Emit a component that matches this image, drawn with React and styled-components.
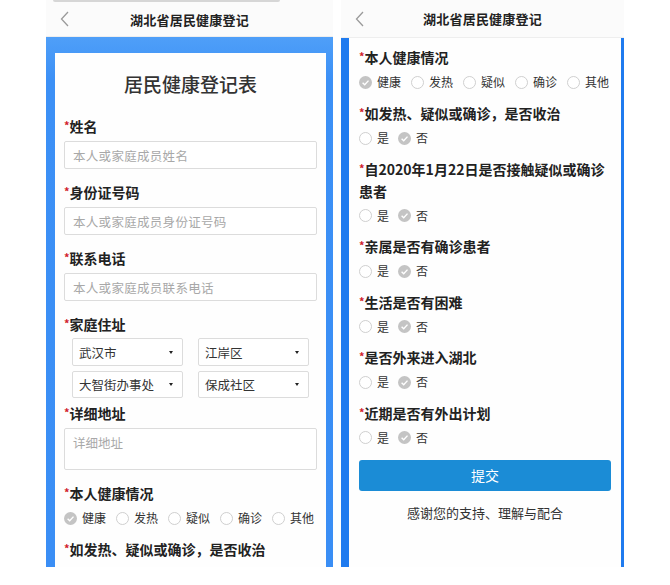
import React from 'react'
import styled, { createGlobalStyle } from 'styled-components'

const GlobalStyle = createGlobalStyle`
  body {
    margin: 0;
    background: #fff;
    font-family: 'Noto Sans CJK SC', 'Noto Sans', sans-serif;
  }
`

const Page = styled.div`
  display: flex;
  align-items: flex-start;
  gap: 8px;
  height: 585px;
  padding-left: 46px;
  overflow: hidden;
`

const Phone = styled.div`
  width: ${(p) => p.$width}px;
  height: 567px;
  display: flex;
  flex-direction: column;
  overflow: hidden;
  background: #fbfbfb;
`

const TopEdge = styled.div`
  height: 2px;
  margin: 0 53px 0 7px;
  border-radius: 0 0 2px 2px;
  background: #d6d6d6;
`

const Header = styled.div`
  height: ${(p) => p.$height}px;
  display: grid;
  grid-template-columns: 1fr auto 1fr;
  align-items: center;
  flex-shrink: 0;
  border-bottom: 1px solid #eeeeee;
  box-sizing: border-box;

  h2 {
    margin: 0;
    font-size: 13px;
    font-weight: 700;
    color: #222;
    letter-spacing: 0.2px;
  }

  svg {
    margin-left: 14px;
    display: block;
  }
`

const Frame = styled.div`
  flex: 1;
  display: flex;
  padding: ${(p) => (p.$left ? '16px 7px 0 9px' : '0 3px 0 8px')};
  background: ${(p) =>
    p.$left
      ? 'linear-gradient(180deg, #4f9ff8 0%, #3c90f6 8%, #3a8ef5 100%)'
      : '#1f7bef'};
`

const Card = styled.div`
  flex: 1;
  background: #fefefe;
  padding: ${(p) => (p.$left ? '16px 9px 0' : '8px 10px 0')};
  overflow: hidden;
`

const FormTitle = styled.h1`
  margin: 0 0 16px;
  font-size: 19px;
  line-height: 30px;
  font-weight: 500;
  text-align: center;
  color: #333;
`

const Field = styled.div`
  margin-bottom: ${(p) => p.$gap ?? 12}px;
`

const Label = styled.div`
  font-size: 14px;
  line-height: 22px;
  font-weight: 700;
  color: #222;

  span {
    position: relative;
    top: -2px;
    line-height: 0;
    color: #d0202a;
    font-size: 11px;
  }
`

const TextInput = styled.input`
  display: block;
  width: 100%;
  box-sizing: border-box;
  height: 28px;
  margin-top: 4px;
  padding: 0 8px;
  border: 1px solid #dcdcdc;
  border-radius: 2px;
  background: #fff;
  font-family: inherit;
  font-size: 12.5px;
  letter-spacing: 0.3px;

  &::placeholder {
    color: #a8a8a8;
  }
`

const TextArea = styled.textarea`
  display: block;
  width: 100%;
  box-sizing: border-box;
  height: 42px;
  margin-top: 4px;
  padding: 4px 8px;
  border: 1px solid #dcdcdc;
  border-radius: 2px;
  background: #fff;
  font-family: inherit;
  font-size: 12.5px;
  resize: none;

  &::placeholder {
    color: #a8a8a8;
  }
`

const SelectGrid = styled.div`
  display: grid;
  grid-template-columns: 1fr 1fr;
  gap: 5px 15px;
  padding: 3px 8px 0;
`

const SelectBox = styled.div`
  height: ${(p) => p.$height}px;
  box-sizing: border-box;
  display: flex;
  align-items: center;
  justify-content: space-between;
  padding: 0 9px 0 6px;
  border: 1px solid #dcdcdc;
  border-radius: 2px;
  background: #fff;
  font-size: 12.5px;
  color: #333;

  i {
    width: 0;
    height: 0;
    border-left: 2.5px solid transparent;
    border-right: 2.5px solid transparent;
    border-top: 3px solid #222;
  }
`

const RadioRow = styled.div`
  display: flex;
  align-items: center;
  gap: ${(p) => p.$gap}px;
  height: 22px;
  margin-top: 3px;
`

const Option = styled.label`
  display: flex;
  align-items: center;
  gap: 5px;
  font-size: 12px;
  line-height: 22px;
  color: #333;

  svg {
    display: block;
  }
`

const SubmitButton = styled.button`
  display: block;
  width: 100%;
  height: 31px;
  margin-top: 11px;
  border: none;
  border-radius: 3px;
  background: #1b8cd6;
  color: #fff;
  font-family: inherit;
  font-size: 14px;
`

const Thanks = styled.p`
  margin: 12px 0 0;
  line-height: 20px;
  font-size: 13px;
  text-align: center;
  color: #333;
`

const Chevron = () => (
  <svg width="9" height="16" viewBox="0 0 9 16">
    <path d="M8 1 L1.5 8 L8 15" fill="none" stroke="#9a9a9a" strokeWidth="1.3" />
  </svg>
)

const RadioMark = ({ checked }) =>
  checked ? (
    <svg width="13" height="13" viewBox="0 0 13 13">
      <circle cx="6.5" cy="6.5" r="6.5" fill="#c4c4c4" />
      <path d="M3.6 6.8 L5.7 8.8 L9.5 4.6" fill="none" stroke="#fff" strokeWidth="1.4" />
    </svg>
  ) : (
    <svg width="13" height="13" viewBox="0 0 13 13">
      <circle cx="6.5" cy="6.5" r="6" fill="#fff" stroke="#cfcfcf" strokeWidth="1" />
    </svg>
  )

const healthOptions = ['健康', '发热', '疑似', '确诊', '其他']

const Req = ({ children }) => (
  <Label>
    <span>*</span>
    {children}
  </Label>
)

const HealthField = () => (
  <Field $gap={9}>
    <Req>本人健康情况</Req>
    <RadioRow $gap={10}>
      {healthOptions.map((o, i) => (
        <Option key={o}>
          <RadioMark checked={i === 0} />
          {o}
        </Option>
      ))}
    </RadioRow>
  </Field>
)

const YesNo = ({ title }) => (
  <Field $gap={8.5}>
    <Req>{title}</Req>
    <RadioRow $gap={9}>
      <Option>
        <RadioMark />是
      </Option>
      <Option>
        <RadioMark checked />否
      </Option>
    </RadioRow>
  </Field>
)

const questions = [
  '如发热、疑似或确诊，是否收治',
  <>
    自2020年1月22日是否接触疑似或确诊
    <br />
    患者
  </>,
  '亲属是否有确诊患者',
  '生活是否有困难',
  '是否外来进入湖北',
  '近期是否有外出计划',
]

const App = () => (
  <>
    <GlobalStyle />
    <Page>
      <Phone $width={287}>
        <TopEdge />
        <Header $height={35}>
          <Chevron />
          <h2>湖北省居民健康登记</h2>
          <div />
        </Header>
        <Frame $left>
          <Card $left>
            <FormTitle>居民健康登记表</FormTitle>
            <Field>
              <Req>姓名</Req>
              <TextInput placeholder="本人或家庭成员姓名" />
            </Field>
            <Field>
              <Req>身份证号码</Req>
              <TextInput placeholder="本人或家庭成员身份证号码" />
            </Field>
            <Field>
              <Req>联系电话</Req>
              <TextInput placeholder="本人或家庭成员联系电话" />
            </Field>
            <Field $gap={4}>
              <Req>家庭住址</Req>
              <SelectGrid>
                <SelectBox $height={28}>
                  武汉市<i />
                </SelectBox>
                <SelectBox $height={28}>
                  江岸区<i />
                </SelectBox>
                <SelectBox $height={27}>
                  大智街办事处<i />
                </SelectBox>
                <SelectBox $height={27}>
                  保成社区<i />
                </SelectBox>
              </SelectGrid>
            </Field>
            <Field>
              <Req>详细地址</Req>
              <TextArea placeholder="详细地址" />
            </Field>
            <HealthField />
            <Req>如发热、疑似或确诊，是否收治</Req>
          </Card>
        </Frame>
      </Phone>

      <Phone $width={283}>
        <Header $height={38}>
          <Chevron />
          <h2>湖北省居民健康登记</h2>
          <div />
        </Header>
        <Frame>
          <Card>
            <HealthField />
            {questions.map((q, i) => (
              <YesNo key={i} title={q} />
            ))}
            <SubmitButton>提交</SubmitButton>
            <Thanks>感谢您的支持、理解与配合</Thanks>
          </Card>
        </Frame>
      </Phone>
    </Page>
  </>
)

export default App
